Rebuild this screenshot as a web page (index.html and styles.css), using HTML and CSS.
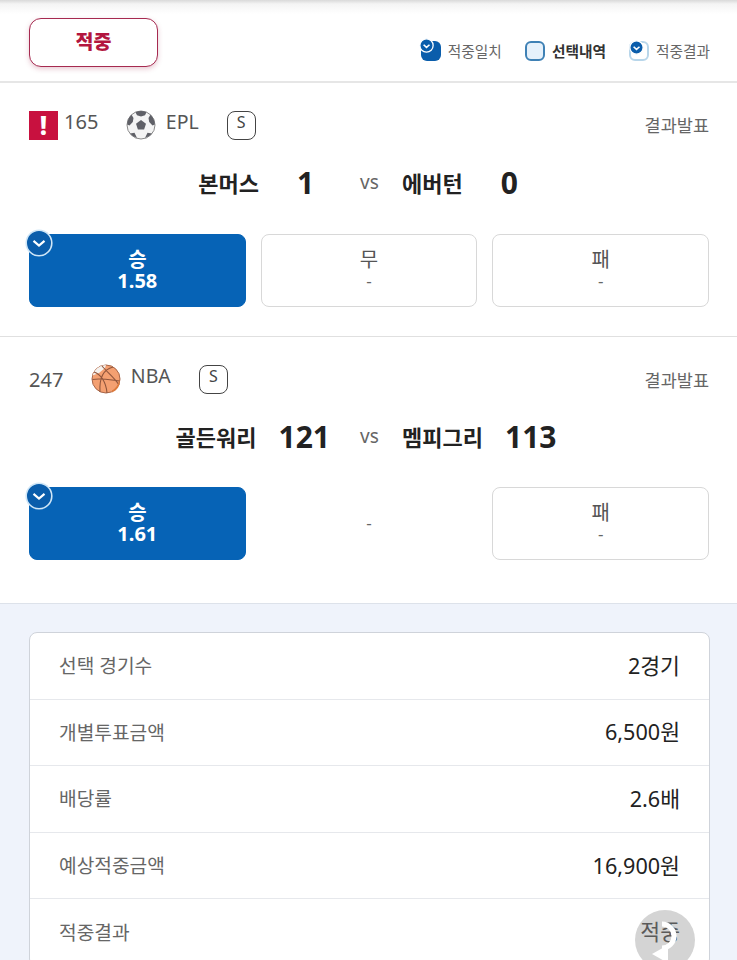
FILE: index.html
```html
<!DOCTYPE html>
<html lang="ko">
<head>
    <meta charset="UTF-8">
    <meta name="viewport" content="width=device-width, initial-scale=1.0">
    <title>적중 결과</title>
    <link rel="stylesheet" href="styles.css">
</head>
<body>
    <div class="topbar">
        <div class="result-tag">적중</div>
        <div class="legend">
            <div class="legend-item">
                <span class="mark mark-match">
                    <svg viewBox="0 0 14 14" class="mini-check"><circle cx="7" cy="7" r="6.2" fill="#0a5dab" stroke="#fff" stroke-width="1.200"/><path d="M4.300 6.300 7 8.800l2.800-2.500" fill="none" stroke="#fff" stroke-width="1.500"/></svg>
                </span>
                <span>적중일치</span>
            </div>
            <div class="legend-item legend-strong">
                <span class="mark mark-select"></span>
                <span>선택내역</span>
            </div>
            <div class="legend-item">
                <span class="mark mark-result">
                    <svg viewBox="0 0 14 14" class="mini-check"><circle cx="7" cy="7" r="6.2" fill="#0a5dab" stroke="#fff" stroke-width="1.200"/><path d="M4.300 6.300 7 8.800l2.800-2.500" fill="none" stroke="#fff" stroke-width="1.500"/></svg>
                </span>
                <span>적중결과</span>
            </div>
        </div>
    </div>

    <div class="game game-first">
        <div class="game-info">
            <div class="game-meta">
                <span class="alert">!</span>
                <span class="game-no no-first">165</span>
                <svg class="ball" viewBox="0 0 30 30">
                    <circle cx="15" cy="15" r="14" fill="#f4f4f4" stroke="#8a8a8a" stroke-width="1"/>
                    <path d="M15 10l5 3.700-1.900 5.800h-6.200L10 13.700z" fill="#5f6067"/>
                    <path d="M9.500 2.200Q15-.2 20.500 2.200L19 5.300 15 6.600 11 5.300zM1.200 14.500Q1.400 8.500 5.600 4.800L7.500 8 6.800 12 3.500 15.500zM28.800 14.500Q28.600 8.500 24.400 4.800L22.500 8 23.200 12 26.500 15.500zM4 23.500 8.500 22.800 11 27.900Q6.800 27 4 23.500zM26 23.500 21.500 22.800 19 27.900Q23.200 27 26 23.500z" fill="#5f6067"/>
                </svg>
                <span class="league">EPL</span>
                <span class="s-badge">S</span>
            </div>
            <span class="status">결과발표</span>
        </div>
        <div class="score-row">
            <div class="side side-home"><span class="team">본머스</span><span class="score">1</span></div>
            <span class="vs">vs</span>
            <div class="side"><span class="team">에버턴</span><span class="score">0</span></div>
        </div>
        <div class="odds">
            <div class="odd odd-on">
                <svg class="check" viewBox="0 0 28 28"><circle cx="14" cy="14" r="12.800" fill="#0a5dab" stroke="#cfe6f7" stroke-width="1.600"/><path d="M8.500 11.800 14 16.500l5.500-4.700" fill="none" stroke="#fff" stroke-width="2.200"/></svg>
                <b>승</b><b>1.58</b>
            </div>
            <div class="odd"><span>무</span><span class="dash">-</span></div>
            <div class="odd"><span>패</span><span class="dash">-</span></div>
        </div>
    </div>

    <div class="game game-second">
        <div class="game-info">
            <div class="game-meta">
                <span class="game-no">247</span>
                <svg class="ball" viewBox="0 0 30 30">
                    <circle cx="15" cy="15" r="14" fill="#f4a071" stroke="#a8674a" stroke-width="1"/>
                    <path d="M15 1A14 14 0 0 0 1.500 11.500L8 9 14 4z" fill="#f5f2ef"/>
                    <path d="M1.500 15.500C10 14 20 16 29 17M22 3C14 5 8 12 9 28M3 8C9 10 15 17 16 29M11 2C16 8 24 14 28 21" fill="none" stroke="#8f553c" stroke-width="1.100"/>
                    <path d="M21 26.500c3.500-2 6.500-6 7.500-11 1.200 6-2.300 11-7.500 13z" fill="#dc7a3c"/>
                </svg>
                <span class="league">NBA</span>
                <span class="s-badge">S</span>
            </div>
            <span class="status">결과발표</span>
        </div>
        <div class="score-row">
            <div class="side side-home"><span class="team">골든워리</span><span class="score">121</span></div>
            <span class="vs">vs</span>
            <div class="side"><span class="team">멤피그리</span><span class="score">113</span></div>
        </div>
        <div class="odds">
            <div class="odd odd-on">
                <svg class="check" viewBox="0 0 28 28"><circle cx="14" cy="14" r="12.800" fill="#0a5dab" stroke="#cfe6f7" stroke-width="1.600"/><path d="M8.500 11.800 14 16.500l5.500-4.700" fill="none" stroke="#fff" stroke-width="2.200"/></svg>
                <b>승</b><b>1.61</b>
            </div>
            <div class="odd odd-empty"><span class="dash">-</span></div>
            <div class="odd"><span>패</span><span class="dash">-</span></div>
        </div>
    </div>

    <div class="summary">
        <div class="summary-card">
            <div class="summary-row"><span>선택 경기수</span><strong>2경기</strong></div>
            <div class="summary-row"><span>개별투표금액</span><strong>6,500원</strong></div>
            <div class="summary-row"><span>배당률</span><strong>2.6배</strong></div>
            <div class="summary-row"><span>예상적중금액</span><strong>16,900원</strong></div>
            <div class="summary-row"><span>적중결과</span><strong>적중</strong></div>
        </div>
    </div>

    <div class="float-back">
        <svg viewBox="0 0 60 60"><path d="M27 14a12 12 0 1 1 0 24" fill="none" stroke="#fff" stroke-width="5"/><path d="M33 35v18L17 44z" fill="#fff"/></svg>
    </div>
</body>
</html>
```

FILE: styles.css
```css
html, body {
    height: 100%;
}
body {
    margin: 0;
    height: 960px;
    overflow: hidden;
    position: relative;
    background: #fff;
    color: #222;
    font-family: "Noto Sans", "Noto Sans CJK KR", sans-serif;
}
.topbar {
    height: 81px;
    padding: 0 27px 0 29px;
    display: flex;
    justify-content: space-between;
    align-items: flex-start;
    border-bottom: 2px solid #e6e6e6;
    background: linear-gradient(#d9d9d9 0, #f4f4f4 4px, #fff 14px);
}
.result-tag {
    width: 127px;
    height: 43px;
    padding-bottom: 4px;
    margin-top: 18px;
    border: 1px solid #a62a50;
    border-radius: 12px;
    background: #fff;
    box-shadow: 0 2px 5px rgba(166, 42, 80, 0.25);
    color: #b3163f;
    font-size: 19.500px;
    font-weight: 800;
    display: flex;
    align-items: center;
    justify-content: center;
}
.legend {
    display: flex;
    gap: 23px;
    margin-top: 40px;
}
.legend-item {
    display: flex;
    align-items: center;
    gap: 7px;
    height: 22px;
    font-size: 14.700px;
    color: #666;
}
.legend-item span:last-child {
    position: relative;
    top: -1px;
}
.legend-strong {
    color: #333;
    font-weight: 700;
}
.mark {
    position: relative;
    width: 20px;
    height: 20px;
    box-sizing: border-box;
    border-radius: 6px;
}
.mark-match {
    background: #0a5dab;
}
.mark-select {
    background: #e6f1fb;
    border: 2px solid #3f81b5;
}
.mark-result {
    background: #fff;
    border: 2px solid #b8d6ea;
}
.mini-check {
    position: absolute;
    top: -3px;
    left: -2px;
    width: 15px;
    height: 15px;
}
.game {
    padding: 0 28px 0 29px;
    border-bottom: 1px solid #e0e0e0;
}
.game-first {
    height: 253px;
}
.game-second {
    height: 266px;
    border-bottom-color: #dde2ea;
}
.game-info {
    display: flex;
    justify-content: space-between;
    align-items: center;
    height: 30px;
    padding-top: 27px;
}
.game-meta {
    display: flex;
    align-items: center;
    font-size: 20px;
    color: #555;
}
.alert {
    width: 29px;
    height: 29px;
    background: #c8113f;
    color: #fff;
    font-size: 26px;
    font-weight: 800;
    line-height: 29px;
    text-align: center;
}
.no-first {
    position: relative;
    top: -4px;
    margin-left: 6px;
}
.ball {
    width: 30px;
    height: 30px;
    margin-left: 28px;
}
.league {
    position: relative;
    top: -4px;
    margin-left: 9.500px;
    font-size: 19.500px;
}
.s-badge {
    width: 29px;
    height: 29px;
    box-sizing: border-box;
    margin-left: 28px;
    border: 1.500px solid #444;
    border-radius: 8px;
    font-size: 16px;
    line-height: 20px;
    text-align: center;
    color: #444;
}
.status {
    font-size: 17.500px;
    color: #666;
}
.game-first .status {
    position: relative;
    top: -1px;
}
.score-row {
    display: flex;
    align-items: center;
    height: 40px;
    margin-top: 22px;
}
.side {
    display: flex;
    align-items: center;
    gap: 22px;
}
.side-home {
    width: 301px;
    justify-content: flex-end;
}
.team {
    font-size: 22px;
    font-weight: 700;
    color: #222;
}
.score {
    min-width: 49px;
    text-align: center;
    font-size: 30px;
    font-weight: 700;
    color: #222;
}
.vs {
    width: 72px;
    box-sizing: border-box;
    padding-left: 7px;
    text-align: center;
    font-size: 19px;
    color: #666;
}
.odds {
    display: grid;
    grid-template-columns: repeat(3, 1fr);
    gap: 15px;
    margin-top: 32px;
}
.game-second .odds {
    margin-top: 31px;
}
.odd {
    position: relative;
    height: 73px;
    box-sizing: border-box;
    padding-bottom: 1px;
    border: 1px solid #d8d8d8;
    border-radius: 8px;
    display: flex;
    flex-direction: column;
    align-items: center;
    justify-content: center;
    font-size: 20px;
    line-height: 21.500px;
    color: #555;
}
.odd-on {
    background: #0663b6;
    border-color: #0663b6;
    color: #fff;
}
.odd-empty {
    border-color: transparent;
}
.dash {
    font-size: 17px;
    color: #666;
}
.check {
    position: absolute;
    top: -6px;
    left: -5px;
    width: 28px;
    height: 28px;
}
.summary {
    background: #eff3fb;
    padding: 28px 27px 0 29px;
    height: 400px;
}
.summary-card {
    background: #fff;
    border: 1px solid #cfd3da;
    border-radius: 8px;
}
.summary-row {
    height: 64.600px;
    padding: 0 29px 1px;
    display: flex;
    justify-content: space-between;
    align-items: center;
    border-bottom: 1px solid #e6e8ec;
    font-size: 19.200px;
    color: #666;
}
.summary-row strong {
    position: relative;
    top: -1px;
    font-size: 21.600px;
    font-weight: 400;
    color: #222;
}
.float-back {
    position: absolute;
    left: 635px;
    top: 910px;
    width: 60px;
    height: 60px;
    border-radius: 50%;
    background: rgba(160, 160, 160, 0.45);
    box-shadow: 0 0 0 5px rgba(255, 255, 255, 0.15);
}
.float-back svg {
    width: 60px;
    height: 60px;
}
```
